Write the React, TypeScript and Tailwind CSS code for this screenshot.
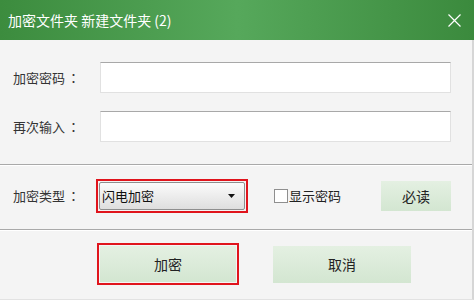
import React from "react";

const font = { fontFamily: '"Noto Sans CJK SC", "Microsoft YaHei", sans-serif' };

function GreenButton({ label, className = "" }: { label: string; className?: string }) {
  return (
    <button
      className={`flex items-center justify-center bg-gradient-to-b from-[#e4f0e2] to-[#d3e6d1] text-[14px] text-[#222] ${className}`}
    >
      {label}
    </button>
  );
}

// full-width colon, centred in its cell like the original UI font
function Label({ text, className }: { text: string; className: string }) {
  return (
    <span className={`text-[13px] text-[#333] ${className}`}>
      {text}
      <span className="ml-[2px] [font-family:'Noto_Sans_CJK_JP',sans-serif]">：</span>
    </span>
  );
}

export default function App() {
  return (
    <div className="flex h-[300px] w-[474px] flex-col overflow-hidden bg-[#f4f4f4]" style={font}>
      <div className="flex h-[40px] shrink-0 items-center justify-between bg-gradient-to-r from-[#3c8c3e] via-[#56a85b] to-[#3b8a3d] pl-[8px] pr-[13px]">
        <span className="text-[14px] text-white">加密文件夹 新建文件夹 (2)</span>
        <svg width="13" height="13" viewBox="0 0 13 13" className="text-white">
          <path d="M0.5 0.5 L12.5 12.5 M12.5 0.5 L0.5 12.5" stroke="currentColor" strokeWidth="1.2" fill="none" />
        </svg>
      </div>

      <div className="flex flex-1 flex-col border-r-2 border-b border-r-[#d6d6d6] border-b-[#e2e2e2]">
        <div className="mt-[22px] flex h-[31px] items-center pl-[13px]">
          <Label text="加密密码" className="w-[87px]" />
          <input className="h-full w-[351px] border border-[#e1e1e1] border-t-[#a8a8a8] bg-white outline-none" />
        </div>
        <div className="mt-[18px] flex h-[31px] items-center pl-[13px]">
          <Label text="再次输入" className="w-[87px]" />
          <input className="h-full w-[351px] border border-[#e1e1e1] border-t-[#a8a8a8] bg-white outline-none" />
        </div>

        <div className="mt-[22px] h-[2px] border-t border-b border-t-[#a9a9a9] border-b-white" />

        <div className="mt-[13px] flex h-[34px] items-center pl-[13px]">
          <Label text="加密类型" className="w-[83px]" />
          <div className="h-[34px] w-[152px] border-2 border-[#e0141c] p-px">
            <div className="flex h-full items-center justify-between rounded-[2px] border border-[#8e8e8e] bg-gradient-to-b from-[#fbfbfb] to-[#dedede] pl-[2px] pr-[9px]">
              <span className="text-[13px] text-[#111]">闪电加密</span>
              <svg width="7" height="4" viewBox="0 0 7 4">
                <path d="M0 0 H7 L3.5 4 Z" fill="#111" />
              </svg>
            </div>
          </div>
          <label className="ml-[26px] flex items-center text-[13px] text-[#222]">
            <span className="mr-px h-[14px] w-[14px] border border-[#8f8f8f] bg-white" />
            显示密码
          </label>
          <GreenButton label="必读" className="ml-[40px] h-[30px] w-[70px]" />
        </div>

        <div className="mt-[16px] h-[2px] border-t border-b border-t-[#a9a9a9] border-b-white" />

        <div className="mt-[12px] flex items-center pl-[97px]">
          <div className="h-[42px] w-[142px] border-2 border-[#e0141c] p-px">
            <GreenButton label="加密" className="h-full w-full" />
          </div>
          <GreenButton label="取消" className="ml-[34px] h-[37px] w-[138px]" />
        </div>
      </div>
    </div>
  );
}
